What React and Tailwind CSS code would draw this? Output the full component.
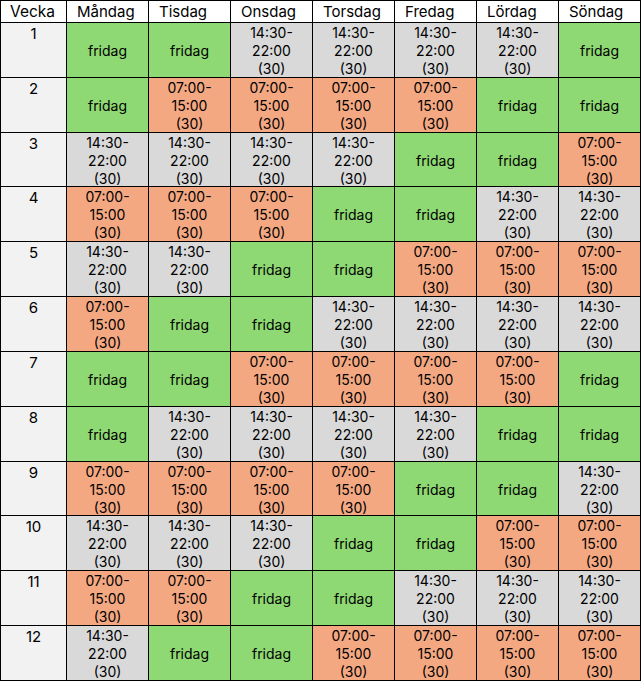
import React from 'react';

const days = ['Måndag', 'Tisdag', 'Onsdag', 'Torsdag', 'Fredag', 'Lördag', 'Söndag'];

// F = fridag, K = kväll (14:30-22:00), M = morgon (07:00-15:00)
const schedule = [
  'FFKKKKF',
  'FMMMMFF',
  'KKKKFFM',
  'MMMFFKK',
  'KKFFMMM',
  'MFFKKKK',
  'FFMMMMF',
  'FKKKKFF',
  'MMMMFFK',
  'KKKFFMM',
  'MMFFKKK',
  'KFFMMMM',
];

const shifts = {
  F: { bg: 'bg-[#8ed973]', lines: ['fridag'] },
  K: { bg: 'bg-[#d9d9d9]', lines: ['14:30-', '22:00', '(30)'] },
  M: { bg: 'bg-[#f4a882]', lines: ['07:00-', '15:00', '(30)'] },
};

const Cell = ({ code }) => {
  const s = shifts[code];
  return (
    <div className={`${s.bg} flex flex-col items-center justify-center pt-[2px] text-[14px] leading-[18px]`}>
      {s.lines.map((l, i) => (
        <span key={i}>{l}</span>
      ))}
    </div>
  );
};

const App = () => {
  return (
    <div className="bg-white w-[643px] h-[682px] font-['Inter',sans-serif] text-black">
      <div className="grid grid-cols-[65px_repeat(7,81px)] grid-rows-[21px_repeat(12,53.83px)] gap-px p-px bg-black w-[641px]">
        <div className="bg-white pl-[9px] text-[15.5px] leading-[21px]">Vecka</div>
        {days.map(d => (
          <div key={d} className="bg-white pl-[10px] text-[15px] leading-[21px]">{d}</div>
        ))}
        {schedule.map((row, r) => (
          <React.Fragment key={r}>
            <div className="bg-[#f2f2f2] text-center pt-[1px] text-[15px] leading-[20px]">{r + 1}</div>
            {row.split('').map((c, i) => (
              <Cell key={i} code={c} />
            ))}
          </React.Fragment>
        ))}
      </div>
    </div>
  );
};

export default App;
